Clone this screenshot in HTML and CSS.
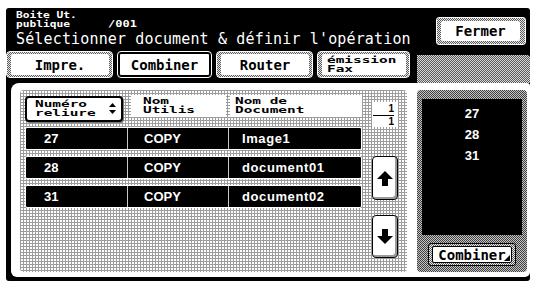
FILE: index.html
```html
<!DOCTYPE html>
<html lang="fr">
<head>
<meta charset="utf-8">
<link rel="stylesheet" href="styles.css">
</head>
<body>
<div class="screen">
  <div class="header">
    <div class="title">
      <div class="title-small"><span>Boite Ut.</span></div>
      <div class="title-small"><span>publique</span><span class="box-no">/001</span></div>
      <div class="title-big">Sélectionner document &amp; définir l'opération</div>
    </div>
    <div class="btn-frame fermer"><div class="btn-inner">Fermer</div></div>
  </div>
  <div class="tabs">
    <div class="tab t1"><div class="tab-inner">Impre.</div></div>
    <div class="tab t2 active"><div class="tab-inner">Combiner</div></div>
    <div class="tab t3"><div class="tab-inner">Router</div></div>
    <div class="tab t4"><div class="tab-inner small-two"><span class="wide">émission</span><span class="wide">Fax</span></div></div>
    <div class="tab-fill"></div>
  </div>
  <div class="content">
    <div class="list">
      <div class="left-col">
        <div class="thead">
          <div class="sortbtn">
            <div class="htext"><span class="wide">Numéro</span><span class="wide">reliure</span></div>
            <svg class="sort-ic" width="7" height="12" viewBox="0 0 7 12"><path d="M3.5 0 L7 4 L0 4 Z M0 7 L7 7 L3.5 11 Z" fill="#000"/></svg>
          </div>
          <div class="hcell hc2"><div class="htext"><span class="wide">Nom</span><span class="wide">Utilis</span></div></div>
          <div class="hcell hc3"><div class="htext"><span class="wide">Nom de</span><span class="wide">Document</span></div></div>
        </div>
        <div class="rows">
          <div class="row"><div class="c c1">27</div><div class="c c2">COPY</div><div class="c c3">Image1</div></div>
          <div class="row"><div class="c c1">28</div><div class="c c2">COPY</div><div class="c c3">document01</div></div>
          <div class="row"><div class="c c1">31</div><div class="c c2">COPY</div><div class="c c3">document02</div></div>
        </div>
      </div>
      <div class="right-col">
        <div class="frac"><div class="fnum">1</div><div class="fden">1</div></div>
        <div class="arrow up">
          <svg width="16" height="15" viewBox="0 0 16 15"><path d="M8 0 L16 8 L11 8 L11 15 L5 15 L5 8 L0 8 Z" fill="#000"/></svg>
        </div>
        <div class="arrow down">
          <svg width="16" height="15" viewBox="0 0 16 15"><path d="M5 0 L11 0 L11 7 L16 7 L8 15 L0 7 L5 7 Z" fill="#000"/></svg>
        </div>
      </div>
    </div>
    <div class="side">
      <div class="selbox">
        <div class="selnum">27</div>
        <div class="selnum">28</div>
        <div class="selnum">31</div>
      </div>
      <div class="btn-frame combiner"><div class="btn-inner">Combiner<span class="corner"></span></div></div>
    </div>
  </div>
</div>
</body>
</html>
```
FILE: styles.css
```css
* { box-sizing: border-box; }
body {
  margin: 0;
  background: #fff;
  width: 540px;
  height: 285px;
  overflow: hidden;
}
.screen {
  margin: 8px 0 0 6px;
  width: 524px;
  height: 273px;
  background: #000;
  border-radius: 3px;
  display: flex;
  flex-direction: column;
  font-family: "DejaVu Sans Mono", "Liberation Mono", monospace;
  color: #fff;
}
.header {
  height: 42px;
  display: flex;
  justify-content: space-between;
  align-items: flex-start;
  padding: 3px 4px 0 10px;
}
.title-small {
  font-size: 8px;
  line-height: 9px;
  font-weight: bold;
  white-space: nowrap;
}
.title-small span {
  display: inline-block;
  transform: scale(1.4, 1.1);
  transform-origin: left;
}
.title-small .box-no { margin-left: 53px; transform: scale(1.5, 1.1); }
.title-big {
  font-size: 15px;
  line-height: 15px;
  margin-top: 3px;
  letter-spacing: 0.15px;
  white-space: nowrap;
}
.btn-frame {
  border: 1px solid #fff;
  border-radius: 3px;
  padding: 3px 5px 3px 4px;
  background: repeating-conic-gradient(#5a5a5a 0 25%, #e8e8e8 0 50%) 0 0 / 2px 2px;
}
.btn-inner {
  background: #fff;
  color: #000;
  height: 100%;
  border-radius: 2px;
  display: flex;
  align-items: center;
  justify-content: center;
  font-weight: bold;
  font-size: 14px;
  position: relative;
}
.fermer {
  margin-top: 6px;
  width: 90px;
  height: 28px;
}
.tabs {
  height: 33px;
  display: flex;
  padding-top: 1px;
  gap: 4px;
}
.tab {
  height: 27px;
  border-radius: 4px;
  padding: 2px 3px 2px 4px;
  background: repeating-conic-gradient(#5a5a5a 0 25%, #e8e8e8 0 50%) 0 0 / 2px 2px;
  border: 1px solid #fff;
}
.tab-inner {
  height: 100%;
  background: #fff;
  color: #000;
  border-radius: 2px;
  display: flex;
  align-items: center;
  justify-content: center;
  font-size: 14px;
  font-weight: bold;
}
.t1 { width: 107px; }
.t2 { width: 95px; }
.t3 { width: 97px; }
.t4 { width: 93px; }
.tab.active {
  background: #000;
  padding: 1px;
}
.tab.active .tab-inner {
  background: #fff;
  border: 1px solid #000;
  color: #000;
}
.small-two {
  flex-direction: column;
  align-items: flex-start;
  justify-content: center;
  padding-left: 5px;
  font-size: 8px;
  line-height: 9px;
}
.wide {
  display: block;
  transform: scale(1.8, 1.1);
  transform-origin: left;
  white-space: nowrap;
}
.tab-fill {
  flex: 1;
  margin-left: 3px;
  margin-top: 4px;
  background: repeating-conic-gradient(#5a5a5a 0 25%, #d8d8d8 0 50%) 0 0 / 2px 2px;
  border-top-right-radius: 3px;
}
.content {
  margin-left: 5px;
  height: 194px;
  background: #fff;
  border-radius: 8px 3px 5px 6px;
  display: flex;
  gap: 10px;
  padding: 7px 3px 5px 9px;
}
.list {
  width: 387px;
  height: 182px;
  border-radius: 4px;
  background-color: #fff;
  background-image:
    linear-gradient(90deg, #9c9c9c 1px, transparent 1px),
    linear-gradient(#9c9c9c 1px, transparent 1px);
  background-size: 3px 3px;
  display: flex;
  padding: 5px 0 0 5px;
}
.left-col { width: 337px; }
.thead {
  display: flex;
  height: 27px;
  align-items: flex-start;
  color: #000;
}
.htext {
  font-size: 8px;
  line-height: 9px;
  font-weight: bold;
}
.sortbtn {
  width: 98px;
  height: 26px;
  margin-top: 1px;
  background: #fff;
  border: 2px solid #000;
  border-radius: 4px;
  box-shadow: 1px 1px 0 #777;
  display: flex;
  align-items: center;
  padding: 0 5px 0 8px;
}
.sort-ic { margin-left: auto; }
.hcell {
  height: 22px;
  background: #fff;
  display: flex;
  align-items: center;
}
.hc2 { margin-left: 8px; width: 95px; padding-left: 12px; }
.hc3 { margin-left: 4px; width: 132px; padding-left: 5px; }
.rows {
  margin-top: 5px;
  display: flex;
  flex-direction: column;
  gap: 6px;
}
.row {
  height: 23px;
  display: flex;
  background: #000;
  border: 1px solid #fff;
  border-radius: 2px;
  font-family: "Liberation Sans", Arial, sans-serif;
  font-weight: bold;
  font-size: 13px;
  color: #fff;
}
.c {
  display: flex;
  align-items: center;
}
.c1 { width: 102px; padding-left: 18px; border-right: 1px solid #c8c8c8; }
.c2 { width: 101px; padding-left: 16px; border-right: 1px solid #c8c8c8; }
.c3 { flex: 1; padding-left: 13px; letter-spacing: 0.6px; }
.right-col {
  margin-left: 10px;
  width: 26px;
}
.frac {
  margin-top: 7px;
  height: 25px;
  background: #fff;
  color: #000;
  font-family: "Liberation Sans", Arial, sans-serif;
  font-weight: bold;
  font-size: 10px;
  text-align: right;
  padding: 2px 4px 0 1px;
}
.fnum {
  line-height: 10px;
  border-bottom: 1px solid #000;
  padding-bottom: 1px;
}
.fden { line-height: 10px; padding-top: 1px; }
.arrow {
  width: 26px;
  background: #fff;
  border: 1px solid #000;
  border-radius: 4px;
  box-shadow: inset -2px -2px 0 #9a9a9a;
  display: flex;
  align-items: center;
  justify-content: center;
}
.up { margin-top: 29px; height: 44px; }
.down { margin-top: 15px; height: 43px; }
.side {
  width: 110px;
  height: 182px;
  border-radius: 4px;
  background: repeating-conic-gradient(#404040 0 25%, #c4c4c4 0 50%) 0 0 / 2px 2px;
  padding: 9px 5px 0 5px;
  display: flex;
  flex-direction: column;
}
.selbox {
  height: 136px;
  background: #000;
  padding-top: 4px;
  font-family: "Liberation Sans", Arial, sans-serif;
  font-weight: bold;
  font-size: 13px;
  line-height: 21px;
  text-align: center;
  color: #fff;
}
.combiner {
  margin: 8px auto 0;
  width: 88px;
  height: 23px;
  padding: 2px 3px 2px 3px;
  border-color: #000;
}
.combiner .btn-inner { border: 1px solid #000; }
.corner {
  position: absolute;
  right: 1px;
  bottom: 1px;
  width: 0;
  height: 0;
  border-left: 6px solid transparent;
  border-bottom: 6px solid #000;
}
```
